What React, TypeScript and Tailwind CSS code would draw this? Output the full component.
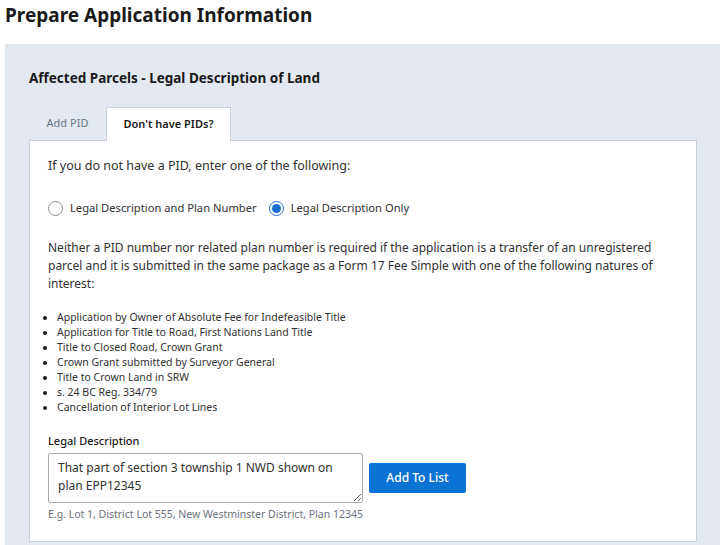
import { useState } from "react";

const items = [
  "Application by Owner of Absolute Fee for Indefeasible Title",
  "Application for Title to Road, First Nations Land Title",
  "Title to Closed Road, Crown Grant",
  "Crown Grant submitted by Surveyor General",
  "Title to Crown Land in SRW",
  "s. 24 BC Reg. 334/79",
  "Cancellation of Interior Lot Lines",
];

function Radio({ checked, label, onClick }: { checked: boolean; label: string; onClick: () => void }) {
  return (
    <label className="flex items-center gap-[7px] cursor-pointer" onClick={onClick}>
      <span
        className={
          checked
            ? "w-[15px] h-[15px] rounded-full border border-[#1a6fd0] flex items-center justify-center"
            : "w-[15px] h-[15px] rounded-full border border-[#8a8f96]"
        }
      >
        {checked && <span className="w-[9px] h-[9px] rounded-full bg-[#1a6fd0]" />}
      </span>
      <span>{label}</span>
    </label>
  );
}

export default function App() {
  const [mode, setMode] = useState("only");

  return (
    <div className="font-['Noto_Sans',sans-serif] text-[#313132] bg-white min-h-[545px]">
      <h1 className="text-[19px] font-bold leading-[30px] px-[5px] pt-0 text-[#1a1a1a]">
        Prepare Application Information
      </h1>

      <div className="ml-[5px] mt-[14px] bg-[#e4e8f0] pl-6 pr-[23px] pt-[24px] pb-[7px]">
        <h2 className="text-[13.5px] font-bold leading-5 text-[#1a1a1a]">
          Affected Parcels - Legal Description of Land
        </h2>

        {/* tabs */}
        <div className="flex mt-[19px] text-[11px]">
          <button className="w-[77px] h-[33px] text-[#6b7786] flex items-center justify-center">
            Add PID
          </button>
          <button className="w-[125px] h-[34px] bg-white border border-b-0 border-[#c8d0da] font-semibold text-[#1a1a1a] flex items-center justify-center -mb-px relative">
            Don't have PIDs?
          </button>
        </div>

        <div className="bg-white border border-[#c8d0da] px-[18px] pt-[15px] pb-[19px] text-[12.5px]">
          <p className="leading-5">If you do not have a PID, enter one of the following:</p>

          <div className="flex items-center gap-[12px] mt-[24px] text-[11.2px]">
            <Radio
              checked={mode === "plan"}
              label="Legal Description and Plan Number"
              onClick={() => setMode("plan")}
            />
            <Radio
              checked={mode === "only"}
              label="Legal Description Only"
              onClick={() => setMode("only")}
            />
          </div>

          <p className="mt-[22px] text-[12px] leading-[18px]">
            Neither a PID number nor related plan number is required if the application is a transfer of an
            unregistered parcel and it is submitted in the same package as a Form 17 Fee Simple with one of the
            following natures of interest:
          </p>

          <ul className="list-disc pl-[9px] mt-[17px] text-[10.5px] leading-[15px] marker:text-[#1a1a1a]">
            {items.map((it) => (
              <li key={it}>{it}</li>
            ))}
          </ul>

          <label className="block mt-[18px] text-[11px] font-medium leading-4 text-[#1a1a1a]">
            Legal Description
          </label>
          <div className="flex items-start gap-[6px] mt-[4px]">
            <textarea
              className="w-[315px] h-[50px] border border-[#a8adb3] rounded-[2px] px-[9px] pt-[5px] text-[12px] leading-[18px] text-[#313132] resize-y outline-none"
              defaultValue="That part of section 3 township 1 NWD shown on plan EPP12345"
            />
            <button className="mt-[10px] w-[97px] h-[30px] bg-[#0b73d3] rounded-[2px] text-white text-[12px] font-medium">
              Add To List
            </button>
          </div>
          <p className="mt-[3px] text-[10.5px] leading-4 text-[#6b7280]">
            E.g. Lot 1, District Lot 555, New Westminster District, Plan 12345
          </p>
        </div>
      </div>
    </div>
  );
}
